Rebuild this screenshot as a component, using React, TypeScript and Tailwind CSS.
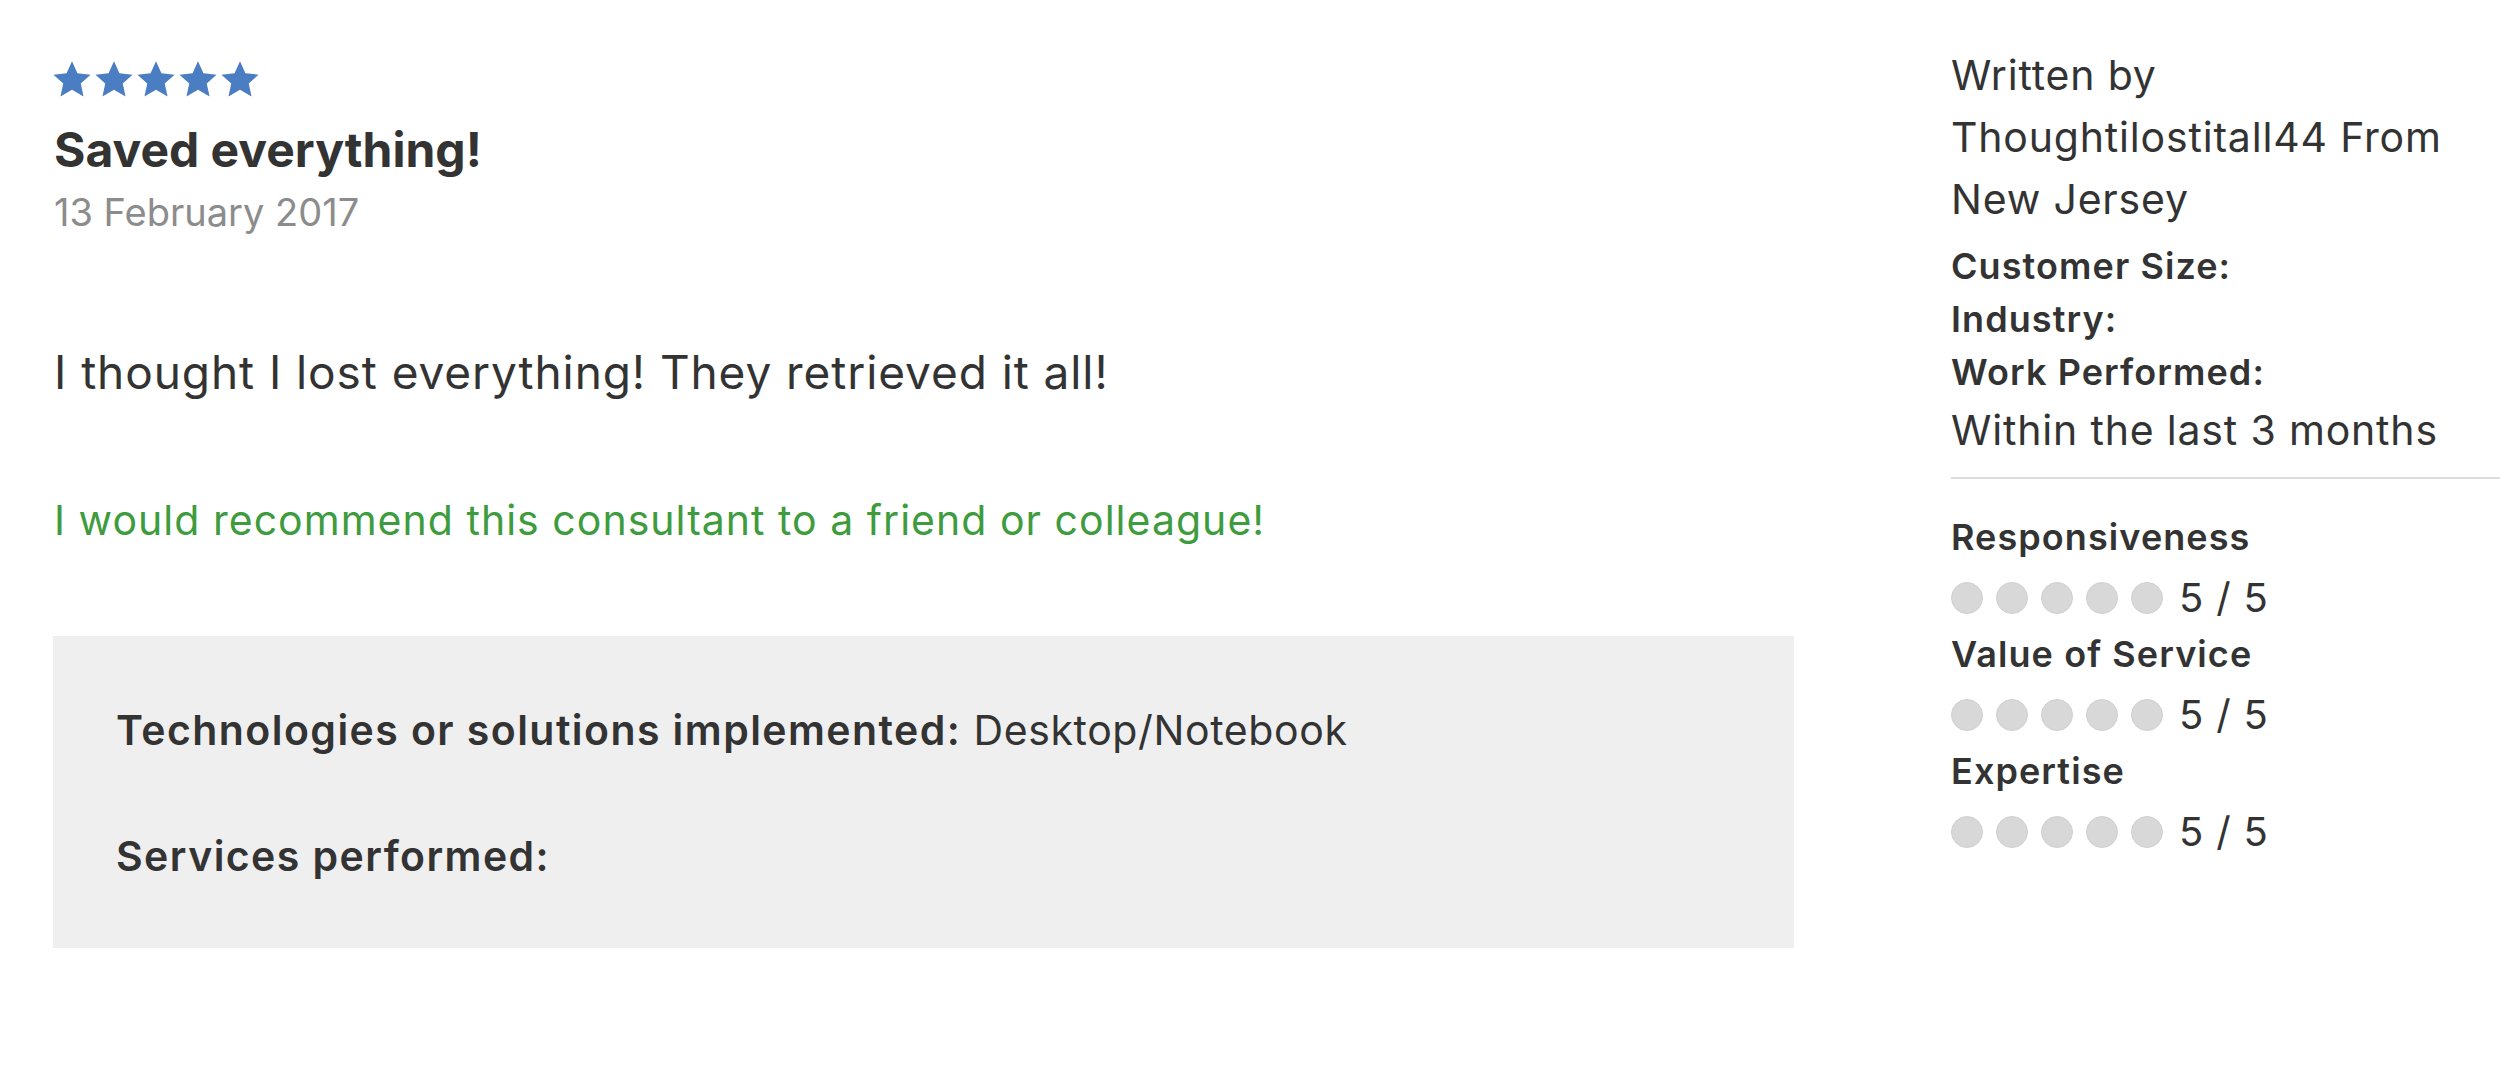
import React from "react";

const review = {
  title: "Saved everything!",
  date: "13 February 2017",
  body: "I thought I lost everything! They retrieved it all!",
  recommend: "I would recommend this consultant to a friend or colleague!",
  technologies: "Desktop/Notebook",
  author: "Thoughtilostitall44",
  location: "New Jersey",
  period: "Within the last 3 months",
  ratings: [
    { label: "Responsiveness", score: 5 },
    { label: "Value of Service", score: 5 },
    { label: "Expertise", score: 5 },
  ],
};

function Star() {
  return (
    <svg viewBox="0 0 24 24" className="w-[42px] h-[42px]">
      <path
        d="M12 1.8l3.1 6.9 7.5.8-5.6 5.1 1.6 7.4L12 18.2l-6.6 3.8 1.6-7.4-5.6-5.1 7.5-.8z"
        fill="#4a7dc2"
      />
    </svg>
  );
}

export default function App() {
  return (
    <div className="bg-white w-[2500px] h-[1091px] flex text-[#333] font-['Inter','Noto_Sans',sans-serif]">
      {/* Review body */}
      <div className="w-[1740px] ml-[54px] pt-[63px] shrink-0">
        <div className="flex h-[32px] items-center -ml-[3px]">
          {[0, 1, 2, 3, 4].map((i) => (
            <Star key={i} />
          ))}
        </div>
        <h1 className="mt-[27px] text-[48px] leading-[56px] font-bold text-[#333]">{review.title}</h1>
        <p className="mt-[10px] text-[38px] leading-[48px] text-[#8c8c8c]">{review.date}</p>

        <p className="mt-[111px] text-[46px] leading-[50px] tracking-[0.02em]">{review.body}</p>
        <p className="mt-[100px] text-[41px] leading-[46px] tracking-[0.025em] text-[#3e9b3e]">
          {review.recommend}
        </p>

        <div className="mt-[93px] -ml-[1px] bg-[#efefef] pl-[63px] pt-[70px] pb-[68px]">
          <p className="text-[41px] leading-[48px] tracking-[0.015em]">
            <span className="font-semibold tracking-[0.035em]">Technologies or solutions implemented:</span>{" "}
            {review.technologies}
          </p>
          <p className="mt-[78px] text-[41px] leading-[48px] tracking-[0.035em] font-semibold">
            Services performed:
          </p>
        </div>
      </div>

      {/* Sidebar */}
      <aside className="ml-[157px] flex-1 pt-[44px]">
        <p className="text-[41px] leading-[62px] tracking-[0.02em] pr-[10px]">
          Written by {review.author} From {review.location}
        </p>
        <div className="mt-[10px] text-[36px] leading-[53px] tracking-[0.03em] font-semibold">
          <p>Customer Size:</p>
          <p>Industry:</p>
          <p>Work Performed:</p>
        </div>
        <p className="text-[41px] leading-[62px] tracking-[0.02em]">{review.period}</p>
        <div className="mt-[16px] h-[2px] bg-[#dddddd]" />

        <div className="mt-[30px]">
          {review.ratings.map((r) => (
            <div key={r.label}>
              <p className="text-[36px] leading-[56px] tracking-[0.03em] font-semibold">{r.label}</p>
              <div className="mt-[4px] flex items-center h-[57px]">
                <div className="flex gap-[13px]">
                  {[0, 1, 2, 3, 4].map((i) => (
                    <span
                      key={i}
                      className="w-[32px] h-[32px] rounded-full bg-[#d8d8d8] border border-[#d0d0d0]"
                    />
                  ))}
                </div>
                <span className="ml-[16px] text-[40px] leading-[57px] tracking-[0.02em]">
                  {r.score} / 5
                </span>
              </div>
            </div>
          ))}
        </div>
      </aside>
    </div>
  );
}
